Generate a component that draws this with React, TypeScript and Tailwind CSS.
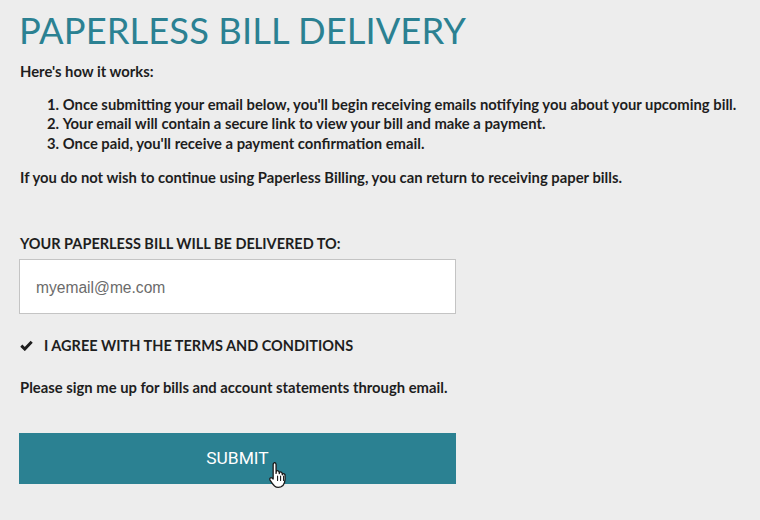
const steps = [
  "Once submitting your email below, you'll begin receiving emails notifying you about your upcoming bill.",
  "Your email will contain a secure link to view your bill and make a payment.",
  "Once paid, you'll receive a payment confirmation email.",
];

const HandCursor = () => (
  <svg width="20" height="28" viewBox="0 0 18 26" className="absolute left-[249px] top-[28px]">
    <path
      d="M5.5 1.5c1 0 1.7.7 1.7 1.7v8.3l.3-2.2c.9-.6 2.2-.3 2.5.8l.2 1.6.3-1.2c.8-.6 2-.3 2.3.7l.2 1.6.4-.8c.8-.5 1.9-.1 2.1.9.3 2.3.3 5-.5 7.3-.6 1.8-1.6 3.3-3.4 3.9-2 .6-4.3.4-5.8-.9-1.4-1.3-3.1-3.6-4.2-5.4-.6-1-.2-2.2 1-2.3.8 0 1.4.6 1.9 1.3V3.2c0-1 .7-1.7 1.7-1.7z"
      fill="#fff"
      stroke="#1a1a1a"
      strokeWidth="1.2"
      strokeLinejoin="round"
    />
    <path d="M8.6 14v4M11.4 14v4M14.2 14v4" stroke="#1a1a1a" strokeWidth="1" strokeLinecap="round" />
  </svg>
);

const App = () => {
  return (
    <div className="min-h-screen w-[760px] h-[520px] bg-[#ededed] pl-[19px] pt-[9px] text-[#1e1e1e] overflow-hidden">
      <h1 className="font-['Lato',sans-serif] text-[36.3px] leading-[42px] text-[#2b8192] tracking-[0.1px]">
        PAPERLESS BILL DELIVERY
      </h1>

      <div className="mt-[11px] pl-px font-['Lato',sans-serif] font-bold text-[14.8px] leading-[19.5px]">
        <p>Here's how it works:</p>
        <ol className="mt-[13px] pl-[27px] list-decimal list-inside">
          {steps.map((s) => (
            <li key={s}>{s}</li>
          ))}
        </ol>
        <p className="mt-[15px]">
          If you do not wish to continue using Paperless Billing, you can return to receiving paper bills.
        </p>
      </div>

      {/* Delivery form */}
      <div className="mt-[46px] w-[437px]">
        <label className="block pl-px font-['Lato',sans-serif] font-bold text-[14.5px] leading-[19px] uppercase">
          Your paperless bill will be delivered to:
        </label>
        <input
          type="text"
          placeholder="myemail@me.com"
          className="mt-[6px] w-full h-[55px] bg-white border border-[#c4c4c4] pl-4 pt-[3px] font-['Liberation_Sans',sans-serif] text-[15.6px] placeholder:text-[#6b6b6b] outline-none"
        />

        <div className="mt-[22px] pl-px flex items-center gap-[11px] font-['Lato',sans-serif] font-bold text-[14.5px] leading-[20px]">
          <svg width="13" height="11" viewBox="0 0 13 11">
            <path d="M1.3 5.6l3.5 3.5L11.7 1.8" fill="none" stroke="#1e1e1e" strokeWidth="2.9" />
          </svg>
          <span>I AGREE WITH THE TERMS AND CONDITIONS</span>
        </div>

        <p className="mt-[22px] pl-px font-['Lato',sans-serif] font-bold text-[14.8px] leading-[19px]">
          Please sign me up for bills and account statements through email.
        </p>

        <div className="relative mt-[36px]">
          <button className="w-full h-[51px] bg-[#2b8192] text-white font-['Roboto',sans-serif] text-[17.4px]">
            SUBMIT
          </button>
          <HandCursor />
        </div>
      </div>
    </div>
  );
};

export default App;
